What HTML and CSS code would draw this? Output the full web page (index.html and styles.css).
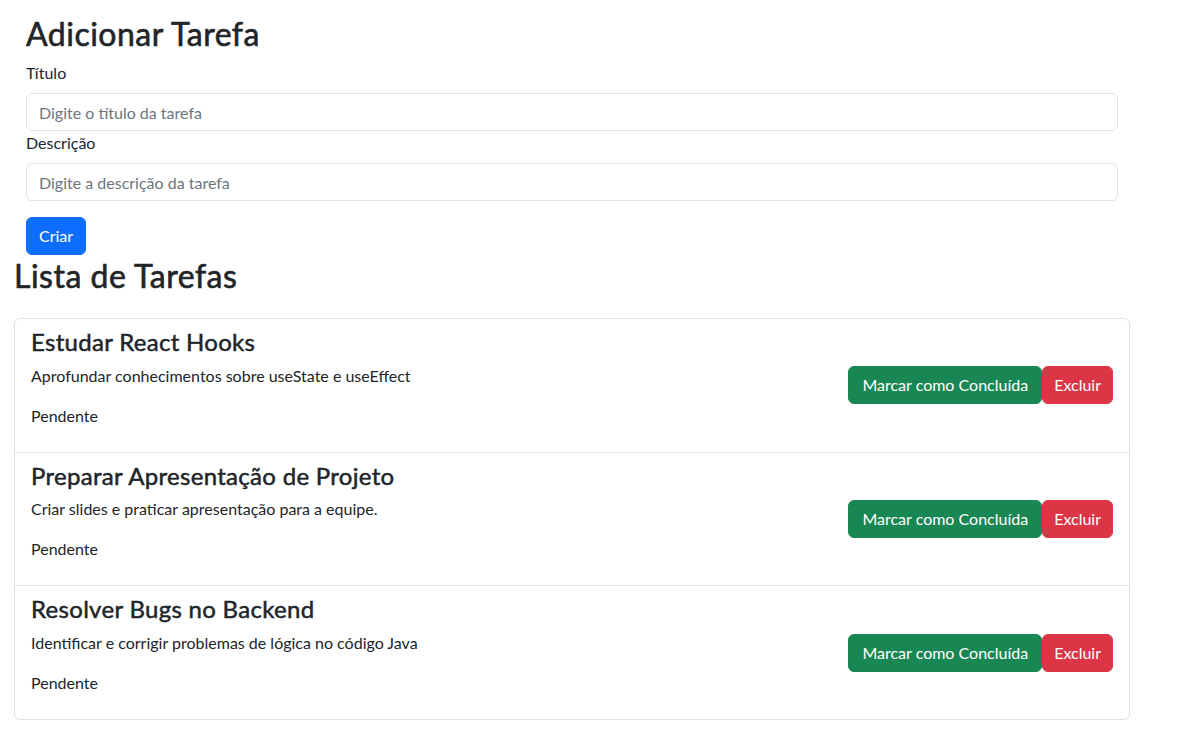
FILE: index.html
```html
<!DOCTYPE html>
<html lang="pt-BR">
<head>
<meta charset="utf-8">
<title>Tarefas</title>
<link rel="stylesheet" href="styles.css">
</head>
<body>
<div class="page">
  <section class="add">
    <h2 class="heading">Adicionar Tarefa</h2>
    <form class="task-form">
      <label class="form-label" for="titulo">Título</label>
      <input class="form-control" id="titulo" type="text" placeholder="Digite o título da tarefa">
      <label class="form-label" for="descricao">Descrição</label>
      <input class="form-control" id="descricao" type="text" placeholder="Digite a descrição da tarefa">
      <button class="btn btn-primary btn-submit" type="button">Criar</button>
    </form>
  </section>
  <h2 class="heading list-heading">Lista de Tarefas</h2>
  <ul class="list-group">
    <li class="list-item">
      <div class="task-info">
        <h4 class="task-title">Estudar React Hooks</h4>
        <p class="task-desc">Aprofundar conhecimentos sobre useState e useEffect</p>
        <p class="task-status">Pendente</p>
      </div>
      <div class="actions">
        <button class="btn btn-success" type="button">Marcar como Concluída</button>
        <button class="btn btn-danger" type="button">Excluir</button>
      </div>
    </li>
    <li class="list-item">
      <div class="task-info">
        <h4 class="task-title">Preparar Apresentação de Projeto</h4>
        <p class="task-desc">Criar slides e praticar apresentação para a equipe.</p>
        <p class="task-status">Pendente</p>
      </div>
      <div class="actions">
        <button class="btn btn-success" type="button">Marcar como Concluída</button>
        <button class="btn btn-danger" type="button">Excluir</button>
      </div>
    </li>
    <li class="list-item">
      <div class="task-info">
        <h4 class="task-title">Resolver Bugs no Backend</h4>
        <p class="task-desc">Identificar e corrigir problemas de lógica no código Java</p>
        <p class="task-status">Pendente</p>
      </div>
      <div class="actions">
        <button class="btn btn-success" type="button">Marcar como Concluída</button>
        <button class="btn btn-danger" type="button">Excluir</button>
      </div>
    </li>
  </ul>
</div>
</body>
</html>
```
FILE: styles.css
```css
*, *::before, *::after { box-sizing: border-box; }

body {
  margin: 0;
  font-family: Lato, "Liberation Sans", sans-serif;
  font-size: 16px;
  line-height: 1.5;
  color: #212529;
  background: #fff;
}

.page {
  width: 1116px;
  margin-left: 14px;
  padding-top: 15px;
}

.add {
  padding: 0 12px;
}

.heading {
  margin: 0 0 8px;
  font-size: 32px;
  font-weight: 400;
  line-height: 38.4px;
  letter-spacing: 0.5px;
  -webkit-text-stroke: 0.6px #212529;
}

.task-form {
  display: flex;
  flex-direction: column;
  align-items: flex-start;
}

.form-label {
  display: block;
  margin-bottom: 8px;
}

.form-control {
  display: block;
  width: 100%;
  height: 38px;
  padding: 6px 12px;
  font-family: inherit;
  font-size: 16px;
  line-height: 1.5;
  color: #212529;
  background: #fff;
  border: 1px solid #dee2e6;
  border-radius: 6px;
  outline: none;
}

.form-control::placeholder {
  color: #6c757d;
  opacity: 1;
}

.btn {
  display: inline-block;
  padding: 6px 12px;
  font-family: inherit;
  font-size: 16px;
  line-height: 24px;
  color: #fff;
  border: 1px solid transparent;
  border-radius: 6px;
  cursor: pointer;
  white-space: nowrap;
}

.btn-primary { background: #0d6efd; border-color: #0d6efd; }
.btn-success { background: #198754; border-color: #198754; padding-left: 13px; padding-right: 13px; }
.btn-danger  { background: #dc3545; border-color: #dc3545; padding-left: 11px; padding-right: 11px; }

.btn-submit {
  margin-top: 16px;
}

.list-heading {
  margin-top: 2px;
  margin-bottom: 22px;
}

.list-group {
  list-style: none;
  margin: 0;
  padding: 0;
  border-radius: 6px;
}

.list-item {
  display: flex;
  justify-content: space-between;
  align-items: center;
  padding: 8px 16px;
  border: 1px solid #dee2e6;
  border-top-width: 0;
}

.list-item:first-child {
  border-top-width: 1px;
  border-radius: 6px 6px 0 0;
}

.list-item:last-child {
  border-radius: 0 0 6px 6px;
}

.task-title {
  margin: 0 0 7px;
  padding-top: 1px;
  font-size: 24px;
  font-weight: 400;
  line-height: 28.8px;
  letter-spacing: 0.3px;
  -webkit-text-stroke: 0.5px #212529;
}

.task-desc,
.task-status {
  margin: 0 0 16px;
}

.actions {
  display: flex;
}
```
